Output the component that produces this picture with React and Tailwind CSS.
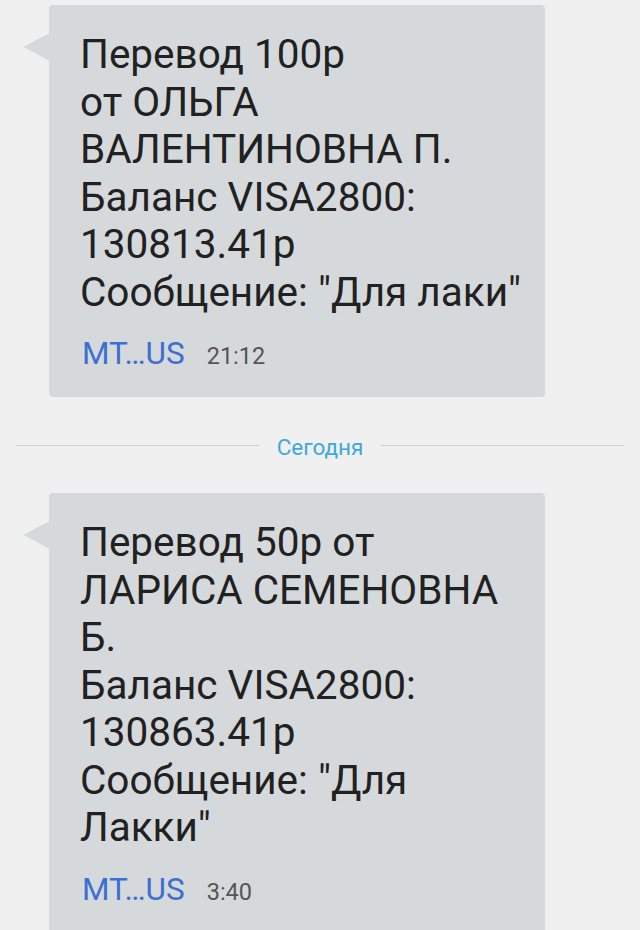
import React from "react";

const messages = [
  {
    lines: [
      "Перевод 100р",
      "от ОЛЬГА",
      "ВАЛЕНТИНОВНА П.",
      "Баланс VISA2800:",
      "130813.41р",
      'Сообщение: "Для лаки"',
    ],
    time: "21:12",
  },
  {
    lines: [
      "Перевод 50р от",
      "ЛАРИСА СЕМЕНОВНА",
      "Б.",
      "Баланс VISA2800:",
      "130863.41р",
      'Сообщение: "Для',
      'Лакки"',
    ],
    time: "3:40",
  },
];

const Bubble = ({ msg }) => (
  <div className="relative ml-[49px] w-[496px] rounded-[4px] bg-[#d6d9dc] pl-[31px] pt-[26px] pb-[23px]">
    <svg
      className="absolute left-[-26px] top-[28px]"
      width="27"
      height="28"
      viewBox="0 0 27 28"
    >
      <polygon points="27,0 0,14 27,28" fill="#d6d9dc" />
    </svg>
    <div className="text-[40.5px] leading-[47.5px] text-[#212121]">
      {msg.lines.map((l, i) => (
        <div key={i} className="whitespace-nowrap">
          {l}
        </div>
      ))}
    </div>
    <div className="mt-[18px] flex items-baseline gap-[22px] h-[40px] pl-[2px]">
      <span className="text-[31.5px] leading-[40px] text-[#3b6fd1]">MT…US</span>
      <span className="text-[23.5px] leading-[40px] text-[#555]">{msg.time}</span>
    </div>
  </div>
);

export default function App() {
  return (
    <div
      className="h-[930px] overflow-hidden bg-[#f0f0f0] pt-[5px]"
      style={{ fontFamily: "Roboto, 'Noto Sans', sans-serif" }}
    >
      <Bubble msg={messages[0]} />
      <div className="flex h-[96px] items-center gap-[18px] px-4">
        <div className="h-px flex-1 bg-[#cfcfcf]" />
        <span className="pt-[5px] text-[22.5px] text-[#3fa8dc]">Сегодня</span>
        <div className="h-px flex-1 bg-[#cfcfcf]" />
      </div>
      <Bubble msg={messages[1]} />
    </div>
  );
}
